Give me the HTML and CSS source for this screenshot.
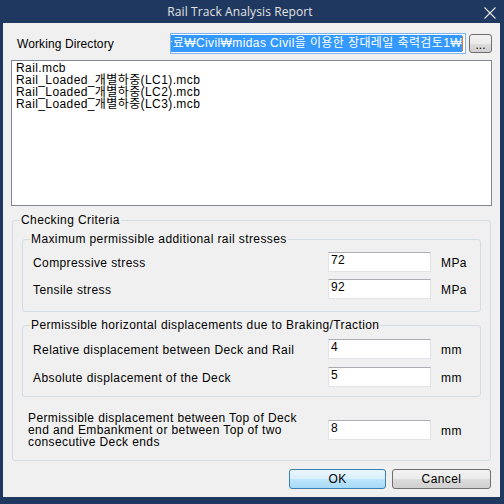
FILE: index.html
```html
<!DOCTYPE html>
<html>
<head>
<meta charset="utf-8">
<link rel="stylesheet" href="styles.css">
</head>
<body>
<div class="window">
  <div class="titlebar">
    <span class="title">Rail Track Analysis Report</span>
    <span class="close-area">
      <svg class="close" width="12" height="12" viewBox="0 0 12 12"><path d="M0.5 0.5 L11.5 11.5 M11.5 0.5 L0.5 11.5" stroke="#e6e6e6" stroke-width="1.1" fill="none"/></svg>
    </span>
  </div>
  <div class="client">
    <div class="dir-row">
      <span class="dir-label">Working Directory</span>
      <div class="dir-box"><span class="dir-sel">자료₩Civil₩midas Civil을 이용한 장대레일 축력검토1₩</span><span class="caret"></span></div>
      <button class="btn-browse">...</button>
    </div>
    <div class="listbox">
      <div class="item">Rail.mcb</div>
      <div class="item">Rail_Loaded_개별하중(LC1).mcb</div>
      <div class="item">Rail_Loaded_개별하중(LC2).mcb</div>
      <div class="item">Rail_Loaded_개별하중(LC3).mcb</div>
    </div>
    <fieldset class="group outer">
      <legend>Checking Criteria</legend>
      <fieldset class="group inner stress">
        <legend>Maximum permissible additional rail stresses</legend>
        <div class="row"><span class="lbl">Compressive stress</span><span class="field">72</span><span class="unit">MPa</span></div>
        <div class="row"><span class="lbl">Tensile stress</span><span class="field">92</span><span class="unit">MPa</span></div>
      </fieldset>
      <fieldset class="group inner disp">
        <legend>Permissible horizontal displacements due to Braking/Traction</legend>
        <div class="row"><span class="lbl">Relative displacement between Deck and Rail</span><span class="field">4</span><span class="unit">mm</span></div>
        <div class="row"><span class="lbl">Absolute displacement of the Deck</span><span class="field">5</span><span class="unit">mm</span></div>
      </fieldset>
      <div class="row last"><span class="lbl multi">Permissible displacement between Top of Deck<br>end and Embankment or between Top of two<br>consecutive Deck ends</span><span class="field">8</span><span class="unit">mm</span></div>
    </fieldset>
    <div class="buttons">
      <button class="btn default">OK</button>
      <button class="btn cancel">Cancel</button>
    </div>
  </div>
</div>
</body>
</html>
```

FILE: styles.css
```css
html, body {
  margin: 0;
  padding: 0;
}
body {
  background: #1f3860;
  font-family: "Liberation Sans", "Noto Sans CJK KR", sans-serif;
  font-size: 12px;
  letter-spacing: 0.4px;
  color: #000;
}
.window {
  width: 504px;
  height: 504px;
  display: flex;
  flex-direction: column;
  background: #1f3860;
}
.titlebar {
  height: 23px;
  display: flex;
  align-items: center;
  flex-shrink: 0;
}
.title {
  flex: 1;
  text-align: center;
  color: #e2e2e2;
  font-family: "Open Sans", "Noto Sans", sans-serif;
  font-size: 12px;
  letter-spacing: 0.1px;
  line-height: 23px;
}
.close-area {
  width: 24px;
  display: flex;
  align-items: center;
  padding-top: 2px;
}
.close {
  margin-left: 4px;
}
.client {
  margin: 0 4px 0 3px;
  height: 474px;
  box-sizing: border-box;
  background: #f0f0f0;
  padding: 10px 8px 0 8px;
  display: flex;
  flex-direction: column;
}
.dir-row {
  display: flex;
  align-items: center;
  height: 21px;
}
.dir-label {
  width: 153px;
  margin-left: 6px;
  line-height: 14px;
  padding-top: 1px;
  letter-spacing: 0.1px;
}
.dir-box {
  width: 296px;
  height: 21px;
  box-sizing: border-box;
  border: 1px solid #7eb4ea;
  background: #fff;
  display: flex;
  justify-content: flex-end;
  align-items: center;
  overflow: hidden;
  padding: 1px 2px 1px 1px;
}
.dir-sel {
  flex-shrink: 0;
  white-space: nowrap;
  background: #3399ff;
  color: #fff;
  line-height: 17px;
  height: 17px;
}
.caret {
  flex-shrink: 0;
  width: 1px;
  height: 15px;
  background: #e07a2a;
}
.btn-browse {
  margin-left: 3px;
  width: 23px;
  height: 19px;
  box-sizing: border-box;
  padding: 0;
  border: 1px solid #707070;
  border-radius: 3px;
  background: linear-gradient(#f2f2f2 0%, #ebebeb 50%, #dddddd 51%, #cfcfcf 100%);
  font-family: "Liberation Sans", sans-serif;
  font-size: 12px;
  letter-spacing: 0;
  line-height: 12px;
  color: #000;
  padding-top: 3px;
}
.listbox {
  margin-top: 6px;
  height: 146px;
  box-sizing: border-box;
  border: 1px solid #828790;
  background: #fff;
  padding: 1px 4px;
}
.item {
  line-height: 12px;
  height: 12px;
  white-space: nowrap;
}
.group {
  margin: 0;
  border: 1px solid #d5dde4;
  border-radius: 3px;
  min-width: 0;
}
.group legend {
  padding: 0 1px;
  line-height: 14px;
  height: 14px;
}
.outer {
  margin: 7px 1px 0 1px;
  padding: 5px 9px 12px 9px;
}
.outer > legend {
  margin-left: -2px;
}
.inner {
  padding: 6px 0 12px 10px;
}
.inner > legend {
  margin-left: -3px;
}
.disp {
  margin-top: 6px;
  padding-top: 7px;
  padding-bottom: 9px;
}
.row {
  display: flex;
  align-items: center;
  height: 20px;
}
.stress .row + .row {
  margin-top: 7px;
}
.disp .row + .row {
  margin-top: 8px;
}
.lbl {
  width: 295px;
  white-space: nowrap;
  padding-top: 2px;
}
.field {
  width: 103px;
  height: 20px;
  box-sizing: border-box;
  background: #fff;
  border: 1px solid #e2e3ea;
  border-top-color: #abadb3;
  padding: 1px 2px;
  line-height: 12px;
}
.unit {
  margin-left: 10px;
  padding-top: 2px;
}
.last {
  height: 36px;
  margin-top: 15px;
}
.multi {
  width: 300px;
  margin-left: 6px;
  line-height: 12px;
  white-space: nowrap;
  padding-top: 0;
}
.buttons {
  display: flex;
  justify-content: flex-end;
  gap: 6px;
  margin-top: 8px;
  margin-right: 1px;
}
.btn {
  height: 20px;
  box-sizing: border-box;
  border: 1px solid #707070;
  border-radius: 3px;
  background: linear-gradient(#f2f2f2 0%, #ebebeb 50%, #dddddd 51%, #cfcfcf 100%);
  font-family: "Liberation Sans", "Noto Sans CJK KR", sans-serif;
  font-size: 12px;
  letter-spacing: 0.4px;
  color: #000;
  padding: 0;
  line-height: 16px;
}
.default {
  width: 97px;
  border-color: #3c7fb1;
  background: linear-gradient(#eaf6fd 0%, #d9f0fc 50%, #bee6fd 51%, #a7d9f5 100%);
}
.cancel {
  width: 99px;
}
```
